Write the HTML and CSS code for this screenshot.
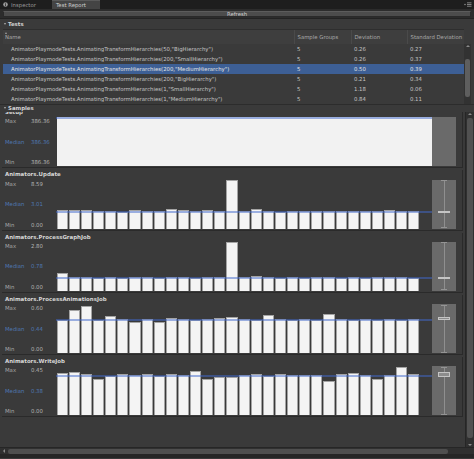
FILE: index.html
```html
<!doctype html>
<html lang="en">
<head>
    <meta charset="UTF-8">
    <meta name="viewport" content="width=device-width, initial-scale=1.0">
    <title>Test Report</title>
    <link rel="stylesheet" href="styles.css">
</head>
<body>
    <div class="tabbar">
        <div class="tab">
            <svg class="tab-icon" width="5" height="5" viewBox="0 0 10 10"><circle cx="5" cy="5" r="4.6" fill="#9c9c9c"/><rect x="4.2" y="4.2" width="1.6" height="3.8" fill="#262626"/><rect x="4.2" y="2" width="1.6" height="1.4" fill="#262626"/></svg>
            Inspector
        </div>
        <div class="tab active">Test Report</div>
        <div class="tab-menu">
            <svg width="8" height="5" viewBox="0 0 16 10"><circle cx="2" cy="5" r="1.4" fill="#a0a0a0"/><rect x="6" y="1" width="9" height="1.5" fill="#a0a0a0"/><rect x="6" y="4.3" width="9" height="1.5" fill="#a0a0a0"/><rect x="6" y="7.6" width="9" height="1.5" fill="#a0a0a0"/></svg>
        </div>
    </div>

    <div class="toolbar"><div class="btn">Refresh</div></div>

    <div class="foldout"><span class="arrow"></span>Tests</div>
    <div class="tests">
        <div class="grid">
            <div class="thead">
                <div class="th th-name"><span class="sort"></span>Name</div>
                <div class="th">Sample Groups</div>
                <div class="th">Deviation</div>
                <div class="th">Standard Deviation</div>
            </div>
            <div class="row"><div class="td td-name">AnimatorPlaymodeTests.AnimatingTransformHierarchies(50,"BigHierarchy")</div><div class="td">5</div><div class="td">0.26</div><div class="td">0.27</div></div>
            <div class="row"><div class="td td-name">AnimatorPlaymodeTests.AnimatingTransformHierarchies(200,"SmallHierarchy")</div><div class="td">5</div><div class="td">0.26</div><div class="td">0.37</div></div>
            <div class="row selected"><div class="td td-name">AnimatorPlaymodeTests.AnimatingTransformHierarchies(200,"MediumHierarchy")</div><div class="td">5</div><div class="td">0.50</div><div class="td">0.39</div></div>
            <div class="row"><div class="td td-name">AnimatorPlaymodeTests.AnimatingTransformHierarchies(200,"BigHierarchy")</div><div class="td">5</div><div class="td">0.21</div><div class="td">0.34</div></div>
            <div class="row"><div class="td td-name">AnimatorPlaymodeTests.AnimatingTransformHierarchies(1,"SmallHierarchy")</div><div class="td">5</div><div class="td">1.18</div><div class="td">0.06</div></div>
            <div class="row"><div class="td td-name">AnimatorPlaymodeTests.AnimatingTransformHierarchies(1,"MediumHierarchy")</div><div class="td">5</div><div class="td">0.84</div><div class="td">0.11</div></div>
        </div>
        <div class="list-scroll">
            <span class="scroll-up"></span>
            <div class="list-thumb"></div>
        </div>
    </div>

    <div class="foldout foldout-samples"><span class="arrow"></span>Samples</div>
    <div class="samples">
        <div class="samples-view">
            <div class="samples-content" id="samples"></div>
        </div>
        <div class="vscroll">
            <span class="scroll-up"></span>
            <div class="vthumb"></div>
            <span class="scroll-down"></span>
        </div>
    </div>
    <div class="hscroll">
        <span class="scroll-left"></span>
        <div class="hthumb"></div>
    </div>
    <div class="statusbar"></div>

    <script src="script.js"></script>
</body>
</html>
```

FILE: styles.css
```css
* {
    margin: 0;
    padding: 0;
    box-sizing: border-box;
}

body {
    width: 474px;
    height: 459px;
    overflow: hidden;
    background-color: #3a3a3a;
    font-family: "DejaVu Sans", "Liberation Sans", sans-serif;
    font-size: 5.35px;
    color: #c4c4c4;
}

/* tabs */
.tabbar {
    height: 9px;
    display: flex;
    background-color: #1e1e1e;
}
.tab {
    width: 51px;
    display: flex;
    align-items: center;
    gap: 3px;
    padding-left: 3px;
    color: #9a9a9a;
}
.tab.active {
    width: 48px;
    margin-left: 1px;
    padding-left: 4px;
    background-color: #444;
    border-top: 1px solid #5a5a5a;
    color: #d0d0d0;
}
.tab-menu {
    margin-left: auto;
    padding: 2px 2px 0 0;
}

/* toolbar */
.toolbar {
    height: 10px;
    padding: 1.5px 3px 1.5px 3px;
    background-color: #2c2c2c;
    border-bottom: 1px solid #232323;
}
.btn {
    height: 100%;
    background-color: #4c4c4c;
    border: 1px solid #2a2a2a;
    border-top-color: #5c5c5c;
    color: #d2d2d2;
    text-align: center;
    line-height: 5px;
}

/* foldouts */
.foldout {
    height: 10px;
    display: flex;
    align-items: center;
    gap: 2px;
    padding-left: 4px;
    font-weight: bold;
    font-size: 5.4px;
    color: #d4d4d4;
}
.foldout-samples {
    height: 7.5px;
    border-top: 1px solid #2c2c2c;
}
.arrow {
    width: 0;
    height: 0;
    border-left: 1.5px solid transparent;
    border-right: 1.5px solid transparent;
    border-top: 2.5px solid #b0b0b0;
}

/* tests table */
.tests {
    display: flex;
}
.grid {
    width: 461px;
    margin-left: 3px;
}
.thead, .row {
    display: grid;
    grid-template-columns: 291px 57px 56px 57px;
}
.thead {
    height: 15px;
    background-color: #3e3e3e;
    border-top: 1px solid #2e2e2e;
}
.th {
    position: relative;
    display: flex;
    align-items: flex-end;
    padding: 0 0 4px 2.5px;
    color: #a9a9a9;
    border-left: 1px solid #4a4a4a;
}
.th-name {
    border-left: none;
    padding-left: 2px;
}
.sort {
    position: absolute;
    left: 2px;
    top: 2px;
    border-left: 1.5px solid transparent;
    border-right: 1.5px solid transparent;
    border-bottom: 2px solid #a0a0a0;
}
.row {
    height: 10px;
    align-items: center;
}
.row.selected {
    background-color: #3d5f95;
    color: #e2e2e2;
}
.td {
    padding-left: 3px;
    white-space: nowrap;
}
.td-name {
    padding-left: 8px;
}
.list-scroll {
    width: 7px;
    margin-top: 15px;
    height: 60px;
    background-color: #323232;
    display: flex;
    flex-direction: column;
    align-items: center;
}
.list-thumb {
    width: 5px;
    height: 38px;
    margin-top: 12px;
    background-color: #5e5e5e;
    border-radius: 2px;
}
.scroll-up {
    margin-top: 1px;
    border-left: 2px solid transparent;
    border-right: 2px solid transparent;
    border-bottom: 2px solid #8a8a8a;
}
.scroll-down {
    margin-top: auto;
    margin-bottom: 1px;
    border-left: 2px solid transparent;
    border-right: 2px solid transparent;
    border-top: 2px solid #8a8a8a;
}

/* samples */
.samples {
    height: 335.5px;
    display: flex;
}
.samples-view {
    width: 465px;
    overflow: hidden;
    padding-left: 2px;
}
.samples-content {
    margin-top: -3.5px;
}
.sample {
    width: 461px;
    padding-bottom: 1px;
    margin-bottom: 2px;
    border-bottom: 1px solid #2a2a2a;
    border-right: 1px solid #2a2a2a;
}
.sample-title {
    height: 9.3px;
    line-height: 9.3px;
    padding-left: 3px;
    font-weight: bold;
    font-size: 5.45px;
    color: #d6d6d6;
}
.sample-body {
    height: 49px;
    display: flex;
}
.stats {
    width: 54px;
    padding-left: 3px;
    display: flex;
    flex-direction: column;
    justify-content: space-between;
}
.stat {
    height: 8px;
    display: flex;
    align-items: center;
    color: #a8a8a8;
}
.stat span {
    width: 26px;
}
.stat b {
    font-weight: normal;
    color: #b4b4b4;
}
.stat.med, .stat.med b {
    color: #4f78b3;
}
.chart {
    width: 376px;
    position: relative;
    display: flex;
    align-items: flex-end;
    padding-left: 0.7px;
}
.bar {
    width: 11.14px;
    margin-right: 1px;
    flex-shrink: 0;
    background-color: #f4f4f4;
    border: 1px solid #a4a4a4;
    border-bottom: none;
}
.bar.full {
    width: 375px;
    border: none;
    background-color: #f2f2f2;
}
.median-line {
    position: absolute;
    left: 0;
    right: 0;
    height: 1.8px;
    background-color: rgba(64, 104, 204, 0.5);
}
.box {
    width: 24px;
    position: relative;
    background-color: #6a6a6a;
}
.whisker {
    position: absolute;
    left: 11.5px;
    top: 0.5px;
    bottom: 0.5px;
    width: 1px;
    background-color: #8f8f8f;
}
.cap {
    position: absolute;
    left: 9px;
    width: 6px;
    height: 1px;
    background-color: #949494;
}
.iqr {
    position: absolute;
    left: 6px;
    width: 12px;
    min-height: 1.2px;
    background-color: #8c8c8c;
    border: 0.6px solid #c4c4c4;
}

/* scrollbars */
.vscroll {
    width: 9px;
    padding: 0 1px;
    display: flex;
    flex-direction: column;
    align-items: center;
    background-color: #303030;
    border-left: 1px solid #262626;
}
.vthumb {
    width: 6px;
    height: 320px;
    margin-top: 3px;
    background-color: #515151;
    border-radius: 2px;
}
.hscroll {
    height: 7px;
    display: flex;
    align-items: center;
    gap: 3px;
    padding-left: 3px;
    background-color: #303030;
    border-top: 1px solid #262626;
}
.scroll-left {
    border-top: 2px solid transparent;
    border-bottom: 2px solid transparent;
    border-right: 2px solid #8a8a8a;
}
.hthumb {
    width: 440px;
    height: 5px;
    background-color: #4f4f4f;
    border-radius: 2px;
}
.statusbar {
    height: 4px;
    background-color: #262626;
}
```

FILE: script.js
```js
var samples = [
    {
        name: 'Setup', max: '386.36', median: '386.36', min: '386.36',
        bars: [49], full: true, line: 47.2
    },
    {
        name: 'Animators.Update', max: '8.59', median: '3.01', min: '0.00',
        bars: [18.6, 18.6, 18.6, 17.3, 17.6, 17, 18.6, 18, 17.3, 19.3, 19, 17.3, 18.3, 18, 48.6,
               18, 19.6, 18, 17, 17.3, 17.3, 17.3, 17.3, 17.3, 17.3, 17.3, 17.3, 18.3, 17.3, 17.3],
        line: 15.7, box: {q3: 31, q1: 32.4}
    },
    {
        name: 'Animators.ProcessGraphJob', max: '2.80', median: '0.78', min: '0.00',
        bars: [17.5, 13.5, 13.5, 13, 13.5, 13, 13.5, 14, 13, 13.5, 13.5, 13, 13.5, 13.5, 49,
               13.5, 14.5, 13.5, 13, 13.5, 13, 13.5, 13.5, 13, 13.5, 13, 13.5, 14, 13.5, 13],
        line: 12, box: {q3: 35.5, q1: 37}
    },
    {
        name: 'Animators.ProcessAnimationsJob', max: '0.60', median: '0.44', min: '0.00',
        bars: [33.4, 43.7, 47.7, 33.7, 37, 34, 31.7, 34, 31, 35, 34, 33.4, 34, 35.7, 36,
               34, 33.5, 38, 34, 33, 34, 33.5, 39, 34, 33, 34.5, 33.5, 34, 33, 34],
        line: 32.6, box: {q3: 12.5, q1: 16}
    },
    {
        name: 'Animators.WriteJob', max: '0.45', median: '0.38', min: '0.00',
        bars: [42.6, 43.6, 41, 36.3, 39.6, 41.6, 40.6, 41.6, 39.3, 41.3, 40.3, 44.6, 36, 38, 38,
               40, 41, 39, 41, 40, 40.6, 40, 34.3, 41, 42.6, 40.3, 36.3, 40, 48, 41],
        line: 38.8, box: {q3: 6, q1: 11}
    }
];

function stat(cls, label, value) {
    return '<div class="stat ' + cls + '"><span>' + label + '</span><b>' + value + '</b></div>';
}

function buildSample(s) {
    var bars = s.bars.map(function (h) {
        return '<div class="bar' + (s.full ? ' full' : '') + '" style="height:' + h + 'px"></div>';
    }).join('');

    var box = '';
    if (s.box) {
        box = '<div class="whisker"></div>' +
            '<div class="cap" style="top:0.5px"></div>' +
            '<div class="cap" style="bottom:0.5px"></div>' +
            '<div class="iqr" style="top:' + s.box.q3 + 'px;height:' + (s.box.q1 - s.box.q3) + 'px"></div>';
    }

    return '<div class="sample">' +
        '<div class="sample-title">' + s.name + '</div>' +
        '<div class="sample-body">' +
            '<div class="stats">' +
                stat('', 'Max', s.max) +
                stat('med', 'Median', s.median) +
                stat('', 'Min', s.min) +
            '</div>' +
            '<div class="chart">' + bars +
                '<div class="median-line" style="bottom:' + s.line + 'px"></div>' +
            '</div>' +
            '<div class="box">' + box + '</div>' +
        '</div>' +
    '</div>';
}

document.getElementById('samples').innerHTML = samples.map(buildSample).join('');
```
